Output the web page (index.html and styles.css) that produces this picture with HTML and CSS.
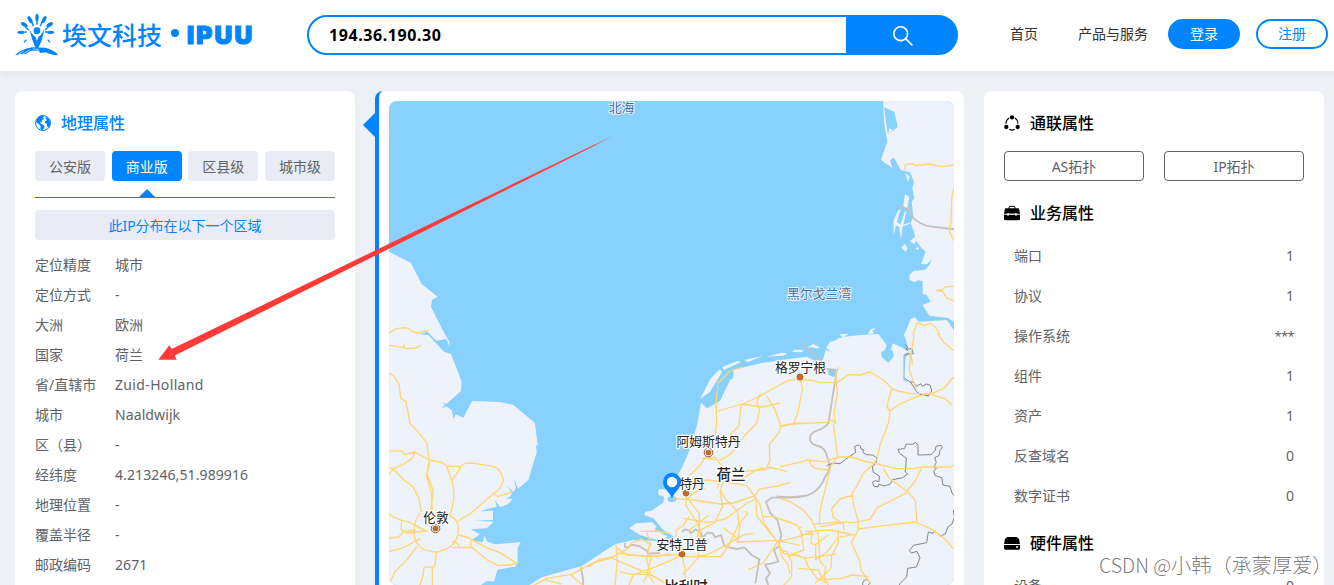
FILE: index.html
```html
<!DOCTYPE html>
<html lang="zh-CN">
<head>
<meta charset="utf-8">
<title>埃文科技 · IPUU</title>
<link rel="stylesheet" href="styles.css">
</head>
<body>
<header class="header">
  <div class="logo">
    <svg class="logo-mark" viewBox="0 0 132 132" width="44" height="44">
      <g fill="#0084ff">
        <circle cx="66" cy="53" r="10"/>
        <path d="M43 47 Q52 68 62 72 L66 84 L70 72 Q80 66 88 47 Q83 82 69 106 L62 106 Q50 80 43 47Z"/>
        <ellipse cx="66" cy="14" rx="5" ry="12"/>
        <ellipse cx="45" cy="20" rx="5.500" ry="12" transform="rotate(-28 45 20)"/>
        <ellipse cx="87" cy="20" rx="5.500" ry="12" transform="rotate(28 87 20)"/>
        <ellipse cx="28" cy="35" rx="6" ry="11" transform="rotate(-57 28 35)"/>
        <ellipse cx="104" cy="35" rx="6" ry="11" transform="rotate(57 104 35)"/>
        <ellipse cx="18" cy="58" rx="11" ry="5"/>
        <ellipse cx="107" cy="58" rx="11" ry="5"/>
        <path d="M1 128 Q15 108 52 103 L90 104 Q118 110 130 127 Q105 126 93 118 L76 120 L70 113 L48 113 L30 124 L15 122Z"/>
      </g>
      <g stroke="#0084ff" stroke-width="4" fill="none">
        <path d="M31 43l10 8M100 43l-10 8M34 80l-7 8M98 80l7 8M51 28l4 12M80 28l-4 12M28 57h7M90 57h8M66 25v10"/>
      </g>
      <path d="M12 123l14-9m-3 9l22-13m6 8l22-5m-20-5l18 1" stroke="#fff" stroke-width="2"/>
    </svg>
    <span class="logo-cn">埃文科技</span>
    <span class="logo-dot"></span>
    <span class="logo-en">IPUU</span>
  </div>
  <div class="search">
    <div class="search-text">194.36.190.30</div>
    <div class="search-button">
      <svg viewBox="0 0 20 20" width="20" height="20" fill="none" stroke="#fff" stroke-width="1.600"><circle cx="7.700" cy="7.700" r="6.900"/><path d="M12.600 12.600L19.400 19.400"/></svg>
    </div>
  </div>
  <nav class="nav">
    <span class="nav-link">首页</span>
    <span class="nav-link nav-products">产品与服务</span>
    <span class="pill pill-solid">登录</span>
    <span class="pill">注册</span>
  </nav>
</header>

<main class="main">
  <section class="card geo">
    <h2 class="title title-active">
      <svg viewBox="0 0 48 48" width="16" height="16"><circle cx="24" cy="24" r="22.500" fill="#fff" stroke="#0084ff" stroke-width="3"/><path fill="#0084ff" d="M8 8Q17 0 29 2L23 7 27 12 20 16 22 21 15 22 18 27 26 30 29 35 23 46 16 43 17 34 12 28 3 21Z M32 5L41 11 45 18 46 28 41 38 36 34 36 27 30 24 31 18 37 15 32 12Z"/></svg>
      地理属性
    </h2>
    <div class="tabs">
      <span class="tab">公安版</span><span class="tab tab-on">商业版</span><span class="tab">区县级</span><span class="tab">城市级</span>
    </div>
    <div class="rule"><i class="rule-mark"></i></div>
    <div class="notice">此IP分布在以下一个区域</div>
    <dl class="facts">
      <dt>定位精度</dt><dd>城市</dd>
      <dt>定位方式</dt><dd>-</dd>
      <dt>大洲</dt><dd>欧洲</dd>
      <dt>国家</dt><dd>荷兰</dd>
      <dt>省/直辖市</dt><dd class="name">Zuid-Holland</dd>
      <dt>城市</dt><dd>Naaldwijk</dd>
      <dt>区（县）</dt><dd>-</dd>
      <dt>经纬度</dt><dd>4.213246,51.989916</dd>
      <dt>地理位置</dt><dd>-</dd>
      <dt>覆盖半径</dt><dd>-</dd>
      <dt>邮政编码</dt><dd>2671</dd>
    </dl>
  </section>

  <section class="card map-card">
    <i class="map-pointer"></i>
    <svg class="map" viewBox="389 101 565 484" width="565" height="484">
      <rect x="389" y="101" width="565" height="484" fill="#88d1fc"/>
      <!-- land -->
      <g fill="#eef3fb">
        <path transform="translate(370 335) scale(.33333)" d="M50-253L57-250 123-216 155-153 203-115 186-105 183-84 226 0 238 20 240 35 228 12 200 17 182 0 172-10 150-2 175 0 222 50 243 57 275 140 273 168 228 208 217 200 224 210 213 222 228 214 245 225 251 252 257 238 280 248 306 198 390 201 430 210 495 264 503 330 498 332 500 352 475 435 444 461 432 430 438 459 430 472 411 450 426 475 420 485 408 490 428 492 415 507 390 517 375 495 380 515 350 522 332 529 369 527 369 555 315 557 372 560 350 580 302 583 330 598 304 616 338 622 344 602 352 620 375 628 452 621 443 640 443 683 435 695 382 704 372 740 350 738 330 752 50 752Z"/>
        <path transform="translate(370 335) scale(.33333)" d="M475 752L515 727 635 693 735 628 790 615 900 620 900 752Z"/>
        <path transform="translate(620 400) scale(.33333)" d="M-15 438L15 430 65 425 100 437 165 412 130 390 100 355 72 345 76 335 95 332 130 308 132 290 115 284 115 268 135 268 180 215 205 160 230 80 243 8 262 25 300 3 330-60 370-85 560-85 560 570-15 570Z M28 385L48 370 97 367 110 380 103 388 145 410 110 420 60 405Z"/>
        <path transform="translate(780 320) scale(.33333)" d="M-140 150L-60 130 20 118 80 110 95 118 125 135 137 90 155 95 138 84 150 65 165 62 175 55 195 50 240 45 295 42 320 75 315 90 303 97 305 112 325 128 342 108 338 92 332 90 338 70 370 85 384 95 370 110 370 180 382 188 374 175 376 115 386 100 378 60 372 45 385 15 392-3 405-8 415 5 500 0 525 35 525 800-140 800Z M180 46l24-5-15 11Z M263 42l13-16 10-1-9 9 5 4Z M-40 110L5 98 22 100 10 107Z M35 96l10-7 26 1 3-3-9 10Z M80 83l20-12 20 12-12 2-15-4Z"/>
        <path transform="translate(660 85) scale(.33333)" d="M669 45L672 110 682 170 663 225 698 250 690 225 702 218 722 255 750 262 762 290 757 310 763 340 755 350 760 395 752 415 762 440 765 455 750 468 762 478 768 468 785 490 797 500 783 537 800 538 815 525 808 540 795 554 760 558 748 570 750 585 762 592 775 586 788 588 788 626 800 630 812 650 787 660 808 692 865 699 885 715 885 45Z M735 262l14 13-5 17Z M735 327l13 8-6 35-13-2Z M715 375l7-2-11 37 10 10 14-42 4 1-9 40 18-7 2 5-22 7-5 40-6-38-9-5-7 30 0-45Z M724 488l10-12 9 14-6 10Z M765 489l12-3-2 10Z M538 748l27-1-13 8Z M625 745l8-13 12-3-9 12 5 7Z"/>
        <path d="M700 399l11-21 9-9 2 3-12 20zM722 367l16-6 3 1-17 8zM744 360l19-4-15 6z"/>
      </g>
      <g fill="#88d1fc">
        <path transform="translate(660 85) scale(.33333)" d="M672 67L703 80 713 125 686 148 699 134 688 130 684 150 678 110Z"/>
        <path transform="translate(780 320) scale(.33333)" d="M130 144L170 147 163 171 145 165 145 151Z"/>
        <ellipse cx="672" cy="499" rx="4.500" ry="3"/>
      </g>
      <!-- borders -->
      <g fill="none" stroke="#c7c0b9" stroke-width="5.500" stroke-linejoin="round">
        <path transform="translate(370 335) scale(.33333)" d="M632 695l8 40-1 20M765 624l0 12 10 2 7-9 25 4 24 15 3 8 36-2"/>
        <path transform="translate(620 400) scale(.33333)" d="M185 395L196 388 207 391 213 400 226 388 243 398 247 412 263 398 278 400 285 412 303 405 313 437 330 443 350 447 373 442 395 465 418 478 406 550M560 287Q530 290 500 293L455 293 438 305 451 340 472 360 484 405 475 440 462 450 475 485 455 490 435 494 450 520 438 535 445 555"/>
        <path transform="translate(780 320) scale(.33333)" d="M65 71L115 115 133 145 170 154 145 310Q135 325 110 332C80 345 88 367 105 375C125 379 135 388 138 400L149 435Q150 452 136 470C118 515 90 540 0 530L-10 529"/>
        <path transform="translate(660 85) scale(.33333)" d="M720 360l18 12 8-4 8 26q28 26 55 30l75 9"/>
      </g>
      <g fill="none" stroke="#74777d" stroke-width="2.700" stroke-linejoin="round" transform="translate(780 320) scale(.33333)">
        <path d="M140 437l20-8 20 2 17-13 30-21-3-17 9-5 8 3 2 9 7 2-1 8 9 7 20 1 12 8-2 17-11 10 3 17 18 11-1 17-12-3-8 5 5 12 12 2 3-8 16 5 18-6 7-13 30-6 15-11-7-6 3-41-21-16-4-11 19-2 6-14 18 1 10-6 7 9 0 29 39-1 13-13 2-12 15-3 4 7-7 8-3 16-13 6 5 14-8 15 8 3-8 9 5 13 19 6 4 22 21 4 6 20 9 10M526 565l-6 7 3 20-7 20-12 8-8 22-15 6-17-15-5 7-14-4-5 32-40 8-12 16 6 7 17-5 9 19-11 28-26 4-3 26-20 20-10 20-12 2"/>
        <path d="M248 800v-12l5-7 10-3 7 10-8 12M375 73l8 8-5 7 18-2 4 15-25 2-4 5M374 175l18 12 18 28 10 8 25 5 10-15-4-17-12-4-12 7-5-8-12 8-8-11-10-3"/>
      </g>
      <!-- roads -->
      <g fill="none" stroke="#ffd570" stroke-width="4" stroke-linejoin="round">
        <g transform="translate(370 335) scale(.33333)">
          <path d="M55-4Q75-21 100-22Q118-22 130-9L145-6 176-14M57 31l43 6 10 4 28-2 14-8M100 37l5-8M57 113l15 11 15 23 5 43 16 10 12 65 21 22 29 35 9 64-10 37 15 48 3 57-7 33M57 349l38-2 10 12 30-8 43 24 38 8 15 10 40 2M57 418l15-18 30-13 25-17 7-18M57 398l13 4 35 35 24 18 18 35 6 40M178 375l-8 40 20 52-4 30-6 40M230 395l17 45 5 30-1 25-10 48M271 399l-27 40M267 399l16-13 25-2 65 11Q395 405 400 435Q396 460 372 475L325 515 300 537 264 558M373 476l10 9 43-14M152 534Q130 555 132 600Q140 650 200 651Q260 640 265 590Q268 550 237 543M57 537l15 10 25 10 20 4 18 10 37 18M57 610l29-4 15-16 35-5M95 560l-2 23 16 11 60-6M57 650l41-11 26-14 28-15M141 635l-31 40-35 35-18 40M200 650l-6 45-32 2-4 30-10 26M187 697v56M245 638l60-1 50 40 30 15 35-2 20-5-50-32-40-15-55-30-28-8M245 622l10-4 11 14 4 8M302 640V616"/>
          <path d="M490 752l40-22 75-12 85-45 43-9 42-24 11-17 29-11 25 16M738 628l4 45-7 80M722 668l112 48 66 34M742 640l30 20 90 4 38-8M630 697l28-2 18-13 54-15M530 725l2 12 42 10M600 718l43 37M810 590l50-2 40 8M830 590l12 40-10 15 12 25-13 45 22 30"/>
        </g>
        <g transform="translate(620 400) scale(.33333)">
          <path d="M288 10L290 70 283 130 266 158 240 196 202 233 183 243M245 175l40-3 15 20 22 18-22 65 8 43-24 50-45 23-10 28 9-27 0-52-20-25-28-35M255 175l45 6 25-14 26-25 18-30 40-40 10-40-9-25 12-25M440-12l25 40 17 50 35-7 28-2M482 78l-5 20-29 35 2 50-13 26-95 7-20 10-22 15-8 25M180 240l50 6 30-6 40 4 80 12 25 35 15 22 13 57 42 60 10 40 17 20 8 32M200 279l-3 35 38 60 7 30-8 70-45 50M160 295l60 5 80 12 40-3 65-22 12-19 55-10 40-10M202 297l18-18 35-13M300 267l15 28 38 40 4 35-30 65-24 35-110 0M190 355l70 12 57-10 60-45 30-15M168 410l0-20 20-12 20-28M205 391l25-16 36-30M310 383l45 35-5 8 120-5 70 15M0 460l80 10 105-7M185 463l10 45 5 60M185 463l-25 15-60 25-60 22-15 35M90 430l-10 50 10 35-20 30M0 515l30 8 60 0 60 35M215 470l45-5 50-25 60-35 30-5M300 313l35-3M430 350l30 0 60 22 25 12M355 418l5-50 22-25-4-10M408 303l2 45 60 75M475 422l-45 67-45 20M475 425l15 35 55 10M330 210l-15 25 38 10 60-38 40-5 50 13"/>
        </g>
        <g transform="translate(780 320) scale(.33333)">
          <path d="M0 195Q25 175 60 180L95 180 120 188 172 187 205 164 240 165 270 156 310 180 342 210 390 221 455 221 492 205 522 170M60 180l8 25-15 75-13 33M0 320l40-8 100-5 17-8 10 12-5-30 10-60-5-55 8-25M160 310l5 40 8 60-20 28-13 52-20 80-2 45M335 207l-15 53 10 15-5 35-25 65-8 40-12 17-30 28-18 35-15 25 3 30 15 55-1 27-20 35 25 55 5 30 28 40M330 272l30-20 50-22 45-11M391 100l-3 50 20 55M455 224l40 12 20 18M0 440l55-12 28-8 50 5 40-14 40 0 50 15 25 5 60 15 50 0 30-5 85 0 28-20M88 420l5 15 12 10 40 5M310 445l18 30 60 45 18 22 5 70M425 445l-18 35-30 40-55 28-30 15-22 35-50 10-45-2-50 5-22 0M237 627l55-8 115-13 50 23 35 25 28 32M220 525l-40 12-25 30 5 25 30 20 2 20M0 535l30 10 40 25 25 30 20 45 5 80 17 15-5 30 15 30M120 620l75-12M75 635l75-5 75 15M0 662l35-6 62-20M0 690l20 5 15 30 0 45-25 27M62 630l10 60-30 10-12 10M95 640l-2 30 14 5 0 45 32-22 35-45 50-10M175 630v40l-20 35-2 40-48 45M70 715l70-8 30-5M35 700l40 15 10 25 30 40 70-5 30-10 50 5M105 675l40-30M55 745l60 5 20 40M0 595l50 20 18 28 35 0"/>
        </g>
        <g transform="translate(660 85) scale(.33333)">
          <path d="M736 255v-16l20-3 10 5 38-4 40 8 40-5M882 310l-6 20-3 80-5 30 16 30M885 604l-30 2-10 8-16 2 20 4 10 18 28 12M759 750l12-37 22 8 18-6 15 12 15 23"/>
          <path d="M762 750l-9 58 4 30M832 745l22 30 30 24"/>
        </g>
        <path stroke-width="1.300" d="M716 403l2-20 12-12 13-4M780 385l-24 13-14 6-24 7M741 404l-2 22-9 9M742 404l20 3 18-4"/>
      </g>
      <!-- cities -->
      <g fill="#d0691e" stroke="#8d5a34" stroke-width=".7">
        <circle cx="800" cy="377" r="3"/><circle cx="686" cy="493" r="3"/><circle cx="682" cy="554" r="3"/>
        <g><circle cx="435.500" cy="528.500" r="4.300" fill="#fff" stroke-width="1"/><circle cx="435.500" cy="528.500" r="2.600"/><circle cx="708.500" cy="452.500" r="4.300" fill="#fff" stroke-width="1"/><circle cx="708.500" cy="452.500" r="2.600"/></g>
      </g>
      <g class="map-label">
        <text class="sea" x="621.500" y="112">北海</text>
        <text class="sea" x="819" y="298">黑尔戈兰湾</text>
        <text x="800.500" y="372">格罗宁根</text>
        <text x="708.500" y="445.800">阿姆斯特丹</text>
        <text x="692" y="487.500">特丹</text>
        <text x="436" y="522">伦敦</text>
        <text x="682" y="549">安特卫普</text>
        <text class="country" x="731" y="479.500">荷兰</text>
        <text class="country" x="686" y="592">比利时</text>
      </g>
      <path fill="#0a84ff" d="M672 498.500C670 492 663 489 663 481.800a9 9 0 0 1 18 0C681 489 674 492 672 498.500Z"/>
      <circle cx="672" cy="482" r="5.200" fill="#fff"/>
    </svg>
  </section>

  <section class="card attrs">
    <h2 class="title">
      <svg viewBox="0 0 48 48" width="16" height="16"><g><circle cx="24" cy="7" r="6.500"/><circle cx="7" cy="36" r="6.500"/><circle cx="41" cy="36" r="6.500"/></g><path d="M15 9Q6 15 6 26M33 9Q42 15 42 26M16 43Q24 48 32 43" fill="none" stroke="#000" stroke-width="3.500"/></svg>
      通联属性
    </h2>
    <div class="links"><span class="link">AS拓扑</span><span class="link">IP拓扑</span></div>
    <h2 class="title title-business">
      <svg viewBox="0 0 48 48" width="16" height="16"><path d="M6 10H42Q46 10 46 14L48 26H0L2 14Q2 10 6 10ZM0 29H48V42Q48 46 43 46H5Q0 46 0 42Z"/><path d="M14 11L17 4H31L34 11" fill="none" stroke="#000" stroke-width="3"/><path d="M10 24h4v8h-4zM34 24h4v8h-4zM14 26h20v2H14z" fill="#fff"/></svg>
      业务属性
    </h2>
    <div class="rows">
      <div class="row"><span>端口</span><b>1</b></div>
      <div class="row"><span>协议</span><b>1</b></div>
      <div class="row"><span>操作系统</span><b class="masked">***</b></div>
      <div class="row"><span>组件</span><b>1</b></div>
      <div class="row"><span>资产</span><b>1</b></div>
      <div class="row"><span>反查域名</span><b>0</b></div>
      <div class="row"><span>数字证书</span><b>0</b></div>
    </div>
    <h2 class="title title-hardware">
      <svg viewBox="0 0 48 48" width="16" height="16"><path d="M9 6H39L45 12 48 27H0L3 12ZM0 30H48V40Q48 44 44 44H4Q0 44 0 40Z"/><circle cx="39" cy="36" r="3" fill="#fff"/></svg>
      硬件属性
    </h2>
    <div class="rows"><div class="row"><span>设备</span><b>0</b></div></div>
  </section>
</main>

<svg class="arrow" viewBox="0 0 1334 585" width="1334" height="585">
  <path fill="#ff3b3a" d="M158.300 359.800L169.300 345.300 171.700 349 390 243.300 590 146.800 612 136.500 590 148 390 248.300 174.700 355.500 176.700 359.800Z"/>
</svg>
<div class="watermark"><span class="watermark-latin">CSDN @</span>小韩（承蒙厚爱）</div>
</body>
</html>
```
FILE: styles.css
```css
* { box-sizing: border-box; }

body {
  margin: 0;
  width: 1334px;
  height: 585px;
  overflow: hidden;
  position: relative;
  display: flex;
  flex-direction: column;
  background: #edf1f5;
  color: #606266;
  font: 14px/20px "Noto Sans", "Noto Sans CJK SC", sans-serif;
}

.header {
  flex: none;
  height: 71px;
  display: flex;
  align-items: flex-start;
  background: #fff;
  box-shadow: 0 1px 10px rgba(0, 0, 0, .08);
}

.logo {
  flex: none;
  width: 307px;
  height: 70px;
  padding-left: 15px;
  display: flex;
  align-items: center;
  color: #0084ff;
}
.logo-mark { flex: none; }
.logo-cn { margin: -3px 0 0 3px; width: 101px; font: 500 25px/36px "Noto Sans CJK SC", sans-serif; white-space: nowrap; }
.logo-dot { width: 8px; height: 8px; margin: 0 0 4px 8px; border-radius: 50%; background: #0084ff; }
.logo-en { margin: -1px 0 0 8px; font: 900 24.500px/36px Inter, sans-serif; letter-spacing: 2.200px; -webkit-text-stroke: 1.200px #0084ff; }

.search {
  flex: none;
  width: 651px;
  height: 40px;
  margin-top: 15px;
  display: flex;
  border: 2px solid #0084ff;
  border-radius: 20px;
  background: linear-gradient(90deg, #fff 539px, #0084ff 539px) border-box;
}
.search-text { flex: none; width: 537px; padding-left: 20px; font-size: 16px; line-height: 36px; font-weight: 700; letter-spacing: .58px; color: #000; }
.search-button { flex: 1; padding: 1px 0 0 3px; display: flex; align-items: center; justify-content: center; }

.nav { flex: none; display: flex; align-items: center; margin: 19px 0 0 52px; height: 30px; color: #303133; white-space: nowrap; }
.nav-products { margin: 0 20px 0 40px; }
.pill {
  flex: none;
  width: 72px;
  height: 30px;
  border: 2px solid #0084ff;
  border-radius: 15px;
  color: #0084ff;
  line-height: 26px;
  text-align: center;
}
.pill-solid { margin-right: 16px; background: #0084ff; color: #fff; }

.main { flex: none; display: flex; align-items: flex-start; gap: 20px; padding: 20px 10px 0 15px; }
.card { flex: none; height: 520px; border-radius: 8px; background: #fff; }
.geo, .attrs { width: 340px; padding: 12px 20px 0; }

.title { margin: 0; height: 40px; display: flex; align-items: center; gap: 10px; color: #000; font-size: 16px; font-weight: 500; }
.title-active { color: #0084ff; }
.title-business { margin-top: 12px; }
.title-hardware { margin-top: 7px; }

.tabs { display: flex; justify-content: space-between; margin-top: 8px; }
.tab { width: 70px; height: 30px; border-radius: 4px; background: #e9ecf5; line-height: 31px; text-align: center; }
.tab-on { background: #0084ff; color: #fff; }
.rule { position: relative; height: 17px; border-bottom: 1px solid #0084ff; }
.rule-mark { position: absolute; left: 104px; bottom: 0; border: 8px solid transparent; border-top: 0; border-bottom-color: #0084ff; }
.notice { height: 30px; margin-top: 12px; border-radius: 4px; background: #e9ecf5; color: #0084ff; line-height: 31px; text-align: center; }

.facts { display: grid; grid-template-columns: 80px 1fr; grid-auto-rows: 30px; margin: 10px 0 0; line-height: 30px; white-space: nowrap; }
.facts dd { margin: 0; letter-spacing: .1px; }
.facts .name { letter-spacing: .35px; }

.map-card { position: relative; width: 589px; padding: 10px 10px 0; border-left: 4px solid #0084ff; }
.map { display: block; border-radius: 8px; }
.map-pointer { position: absolute; left: -16px; top: 22px; border: 12px solid transparent; border-left: 0; border-right-color: #0084ff; }
.map-label { font: 12.800px "Noto Sans CJK SC", sans-serif; text-anchor: middle; fill: #222; stroke: #fff; stroke-width: 2.500px; stroke-linejoin: round; paint-order: stroke; }
.sea { fill: #3e70ad; stroke: #e6f2fb; stroke-width: 2px; }
.country { font-size: 14.500px; font-weight: 500; }

.links { display: flex; gap: 20px; margin-top: 8px; }
.link { width: 140px; height: 30px; border: 1px solid #606266; border-radius: 4px; line-height: 29px; text-align: center; }
.rows { margin-top: 3px; padding: 0 10px; }
.row { height: 40px; display: flex; justify-content: space-between; align-items: center; }
.row b { font-weight: 400; }
.row .masked { font-size: 13px; letter-spacing: -.7px; }

.arrow { position: absolute; left: 0; top: 0; }
.watermark {
  position: absolute;
  left: 1099px;
  top: 551px;
  font: 300 20.200px/28px "Noto Sans CJK SC", sans-serif;
  color: rgba(90, 90, 90, .8);
  white-space: nowrap;
}
.watermark-latin { display: inline-block; width: 72px; font-size: 19.500px; }
```
